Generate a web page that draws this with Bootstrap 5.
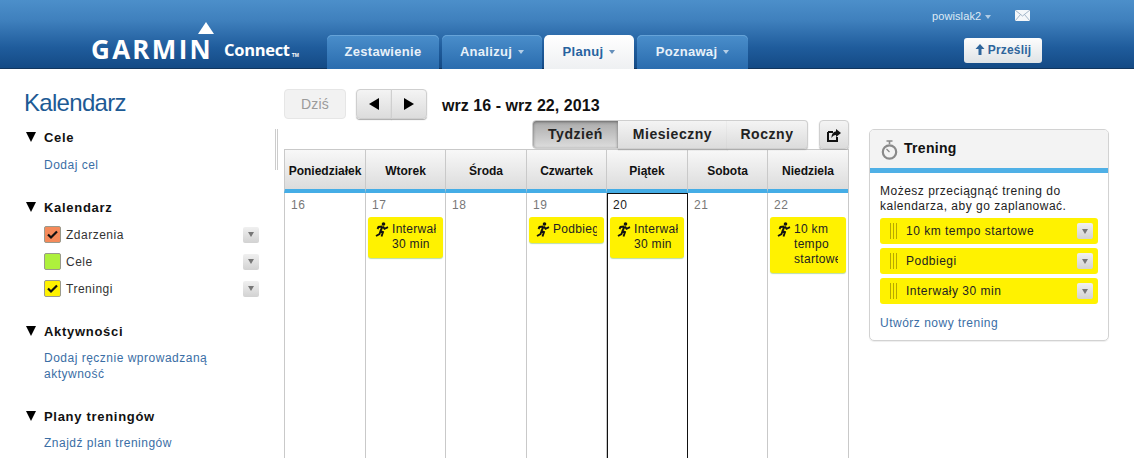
<!DOCTYPE html>
<html lang="pl"><head><meta charset="utf-8"><title>Kalendarz</title>
<link href="https://cdn.jsdelivr.net/npm/bootstrap@5.3.0/dist/css/bootstrap.min.css" rel="stylesheet">
<style>
html,body{height:458px;overflow:hidden;background:#fff}
body{font-family:"Liberation Sans",Arial,sans-serif;font-size:12px;letter-spacing:.5px;color:#222;line-height:16px}
a{color:#3a6ea5;text-decoration:none}
.gc-top{height:69px;margin-right:1px;background:linear-gradient(#4c8fca 0,#3f80bd 30%,#1f5c9c 70%,#144a85 100%);border-bottom:1px solid #12365e}
.gc-user{height:35px;padding:0 0 4px 932px;color:#dfeaf5;font-size:11px;letter-spacing:.1px;white-space:nowrap}
.gc-caret{display:inline-block;border:3px solid transparent;border-top:4px solid currentColor;border-bottom:0;vertical-align:middle;margin-left:6px;opacity:.7}
.gc-user .gc-caret{margin-left:4px}
.gc-mail{margin-left:24px}
.gc-bar{height:34px;padding-left:92px}
.gc-logo{width:235px;height:34px;color:#fff;position:relative;flex:none;display:flex;align-items:flex-end;padding-bottom:11px;line-height:1}
.gc-logo-g{font-family:"Open Sans",sans-serif;font-weight:700;font-size:26px;letter-spacing:2.300px;line-height:18px;height:18px;width:132px;flex:none;margin-left:-1px;margin-right:1px}
.gc-logo-c{font-family:"Open Sans",sans-serif;font-weight:700;font-size:16.500px;letter-spacing:-.3px;line-height:16px}
.gc-logo-t{font-size:5px;letter-spacing:0;margin-left:2px;line-height:1;font-weight:700}
.gc-tri{position:absolute;left:106px;top:-13px;width:0;height:0;border:8px solid transparent;border-bottom:12px solid #fff;border-top:0}
.gc-tab{height:34px;border-radius:5px 5px 0 0;background:linear-gradient(#4a8ecb,#2a6cae);color:#e8f1f9;font-weight:700;font-size:13px;letter-spacing:.3px;display:flex;align-items:center;justify-content:center;margin-right:3px;box-shadow:inset 0 1px 0 #66a3d8}
.gc-tab.on{background:linear-gradient(#fff,#eef0f2);color:#27629f;box-shadow:none;margin-right:3px}
.gc-t1{width:112px}.gc-t2{width:100px;margin-right:2px}.gc-t3{width:90px}.gc-t4{width:111px}
.gc-send{position:absolute;left:964px;top:38px;width:78px;height:25px;padding:0;background:linear-gradient(#fdfdfd,#dfe3e6);border:0;border-radius:3px;color:#2e659c;font-weight:700;font-size:12px;letter-spacing:.2px;line-height:25px}
.gc-send svg{margin-right:3px;vertical-align:-1px}
.gc-main{position:relative}
.gc-side{width:284px;flex:none;padding:19px 0 0 24px;position:relative}
.gc-side h1{font-size:24px;font-weight:400;letter-spacing:-.7px;color:#1d5a94;margin:0 0 12px;line-height:30px;height:30px}
.gc-sec{margin-bottom:25px}
.gc-sec h2{font-size:13px;font-weight:700;color:#111;margin:0;letter-spacing:.7px;line-height:16px;display:flex;align-items:center;padding-left:2px}
.gc-sec h2 i{width:0;height:0;border:5px solid transparent;border-top:10px solid #000;border-bottom:0;margin-right:8px;margin-top:-3px}
.gc-body{padding:11px 0 0 20px}
.gc-sec2{margin-bottom:27px}
.gc-sec3{margin-bottom:22px}
.gc-sec3 .gc-body{padding-top:5px}
.gc-sec4{margin-bottom:27px}
.gc-sec4 .gc-body,.gc-sec5 .gc-body{padding-top:10px}
.gc-row{display:flex;align-items:center;height:27px;padding-right:25px;color:#333}
.gc-chk{width:17px;height:17px;border-radius:2px;border:1px solid #9a9a8c;margin-right:5px;display:flex;align-items:center;justify-content:center}
.gc-dd{width:16px;height:16px;margin-left:auto;border-radius:2px;background:linear-gradient(#f0f0f0,#d2d2d2);display:flex;align-items:center;justify-content:center;color:#777}
.gc-dd::after{content:"";border:3px solid transparent;border-top:5px solid #777;border-bottom:0}
.gc-split{position:absolute;left:275px;top:60px;width:3px;height:41px;border-left:1px solid #ccc;border-right:1px solid #ccc}
.gc-mid{width:565px;flex:none;padding-top:20px;height:389px}
.gc-gbtn{background:linear-gradient(#f4f4f4,#dcdcdc);border:1px solid #cfcfcf;border-radius:4px;color:#111;padding:0;box-shadow:0 1px 1px #aaa}
.gc-today{width:62px;height:30px;background:#f2f2f2;color:#9b9b9b;font-size:14px;letter-spacing:.2px;box-shadow:none;border-color:#e6e6e6;margin-right:10px}
.gc-arrow{width:36px;height:30px;display:flex;align-items:center;justify-content:center}
.gc-title{font-size:16px;font-weight:700;color:#111;letter-spacing:.05px;margin:3px 0 0 15px}
.gc-views{height:29px;margin-top:1px;justify-content:flex-end}
.gc-vbtn{height:29px;font-size:14px;font-weight:700;letter-spacing:.55px;color:#222;border-radius:0}
.gc-vbtn.on{background:linear-gradient(#aaa,#ddd);box-shadow:inset 0 1px 3px #666;border-radius:4px 0 0 4px;width:87px}
.gc-v2{width:110px;border-left:0}
.gc-v3{width:81px;border-left:0;border-radius:0 4px 4px 0}
.gc-share{width:30px;height:29px;margin-left:11px;display:flex;align-items:center;justify-content:center}
.gc-cal{display:grid;grid-template-columns:81px 80px 81px 80px 81px 80px 81px;border:1px solid #c9c9c9;border-width:1px 1px 0 0;height:310px}
.gc-th{height:43px;background:linear-gradient(#f8f8f8,#dcdcdc);border-left:1px solid #c9c9c9;border-bottom:4px solid #45ade6;font-size:12px;font-weight:700;letter-spacing:0;color:#111;text-align:center;line-height:42px;white-space:nowrap;overflow:hidden}
.gc-td{border-left:1px solid #c9c9c9;padding:3px 2px 0;overflow:hidden;height:266px}
.gc-td.now{box-shadow:inset 1px 0 #111,inset 0 1px #111;padding:3px 3px 0}
.gc-td.now+.gc-td{border-left-color:#111}
.gc-td.now .gc-n{color:#222;padding-left:3px}
.gc-n{display:block;font-size:12px;color:#777;padding-left:4px;height:20px;line-height:16px;margin-top:1px}
.gc-ev{background:#fff200;border-radius:3px;box-shadow:0 1px 1px #bda;color:#222;display:flex;padding:5px 0 0 6px;overflow:hidden;white-space:nowrap;height:41px;line-height:15px;letter-spacing:.3px}
.gc-ev.s1{height:26px}.gc-ev.s3{height:56px}
.gc-ev svg{flex:none;margin-right:3px}
.gc-ev span{display:block;width:44px;flex:none;overflow:hidden}
.gc-panel{width:240px;margin:60px 0 0 20px;height:212px;flex:none;border:1px solid #d2d2d2;border-radius:5px;overflow:hidden;box-shadow:0 1px 1px #eee}
.gc-phead{height:43px;background:#f3f3f3;border-bottom:5px solid #4fb0e6;display:flex;align-items:center;font-size:14px;font-weight:700;color:#111;letter-spacing:.3px;padding:0 0 2px 11px}
.gc-phead svg{margin-right:6px;margin-top:4px}
.gc-pbody{padding:11px 10px 0;line-height:15px;color:#222}
.gc-item{height:26px;background:#fff200;border-radius:3px;display:flex;align-items:center;margin-bottom:4px;padding:0 5px 0 26px;position:relative;color:#222}
.gc-item:first-of-type{margin-top:4px}
.gc-item::before{content:"";position:absolute;left:10px;top:5px;width:7px;height:16px;background:repeating-linear-gradient(90deg,#b8a800 0 1px,transparent 1px 3px)}
.gc-pbody a{display:block;margin-top:12px}
</style></head><body>
<header class="gc-top position-relative">
  <div class="gc-user d-flex align-items-center"><span>powislak2<i class="gc-caret"></i></span>
    <svg class="gc-mail" width="15" height="11" viewBox="0 0 15 11"><rect width="15" height="11" fill="#f4f7fa"/><path d="M0 0l7.500 6L15 0M0 11l5.500-6.500M15 11L9.500 4.500" fill="none" stroke="#8fa6bd" stroke-width=".8"/></svg></div>
  <div class="gc-bar d-flex">
    <div class="gc-logo"><i class="gc-tri"></i><span class="gc-logo-g">GARMIN</span><span class="gc-logo-c">Connect</span><span class="gc-logo-t">TM</span></div>
    <nav class="d-flex">
      <a href="#" class="gc-tab gc-t1">Zestawienie</a>
      <a href="#" class="gc-tab gc-t2">Analizuj<i class="gc-caret"></i></a>
      <a href="#" class="gc-tab on gc-t3">Planuj<i class="gc-caret"></i></a>
      <a href="#" class="gc-tab gc-t4">Poznawaj<i class="gc-caret"></i></a>
    </nav>
  </div>
  <button class="btn gc-send"><svg width="10" height="11" viewBox="0 0 10 11"><path d="M5 0L9.500 5H6.500V11H3.500V5H.5z" fill="#2e659c"/></svg>Prześlij</button>
</header>
<main class="gc-main d-flex">
  <aside class="gc-side">
    <h1>Kalendarz</h1>
    <section class="gc-sec gc-sec2"><h2><i></i>Cele</h2><div class="gc-body"><a href="#">Dodaj cel</a></div></section>
    <section class="gc-sec gc-sec3"><h2><i></i>Kalendarz</h2><div class="gc-body">
      <div class="gc-row"><span class="gc-chk" style="background:#f58a5a"><svg width="13" height="11" viewBox="0 0 13 11"><path d="M2 5.500l3 3 6-6" fill="none" stroke="#111" stroke-width="2.200"/></svg></span>Zdarzenia<span class="gc-dd"></span></div>
      <div class="gc-row"><span class="gc-chk" style="background:#aef03c"></span>Cele<span class="gc-dd"></span></div>
      <div class="gc-row"><span class="gc-chk" style="background:#fff200"><svg width="13" height="11" viewBox="0 0 13 11"><path d="M2 5.500l3 3 6-6" fill="none" stroke="#111" stroke-width="2.200"/></svg></span>Treningi<span class="gc-dd"></span></div>
    </div></section>
    <section class="gc-sec gc-sec4"><h2><i></i>Aktywności</h2><div class="gc-body"><a href="#">Dodaj ręcznie wprowadzaną<br>aktywność</a></div></section>
    <section class="gc-sec gc-sec5"><h2><i></i>Plany treningów</h2><div class="gc-body"><a href="#">Znajdź plan treningów</a></div></section>
    <div class="gc-split"></div>
  </aside>
  <div class="gc-mid">
    <div class="d-flex align-items-center">
      <button class="btn gc-gbtn gc-today">Dziś</button>
      <div class="btn-group">
        <button class="btn gc-gbtn gc-arrow"><svg width="12" height="12" viewBox="0 0 12 12"><path d="M11 0v12L1 6z" fill="#000"/></svg></button>
        <button class="btn gc-gbtn gc-arrow"><svg width="12" height="12" viewBox="0 0 12 12"><path d="M1 0v12l10-6z" fill="#000"/></svg></button>
      </div>
      <span class="gc-title">wrz 16 - wrz 22, 2013</span>
    </div>
    <div class="d-flex gc-views">
      <div class="btn-group">
        <button class="btn gc-gbtn gc-vbtn on">Tydzień</button>
        <button class="btn gc-gbtn gc-vbtn gc-v2">Miesieczny</button>
        <button class="btn gc-gbtn gc-vbtn gc-v3">Roczny</button>
      </div>
      <button class="btn gc-gbtn gc-share"><svg width="16" height="14" viewBox="0 0 16 14"><path d="M2 4h5M2 4v9h9V9" fill="none" stroke="#111" stroke-width="2"/><path d="M10 1l5 4-5 4V7C8 7 6.500 8 5.500 10 5.500 6 7.500 3.500 10 3.500z" fill="#111"/></svg></button>
    </div>
    <div class="gc-cal">
      <div class="gc-th">Poniedziałek</div><div class="gc-th">Wtorek</div><div class="gc-th">Środa</div><div class="gc-th">Czwartek</div><div class="gc-th">Piątek</div><div class="gc-th">Sobota</div><div class="gc-th">Niedziela</div>
      <div class="gc-td"><span class="gc-n">16</span></div>
      <div class="gc-td"><span class="gc-n">17</span><div class="gc-ev"><svg width="15" height="15" viewBox="0 0 15 15"><use href="#rn"/></svg><span>Interwał<br>30 min</span></div></div>
      <div class="gc-td"><span class="gc-n">18</span></div>
      <div class="gc-td"><span class="gc-n">19</span><div class="gc-ev s1"><svg width="15" height="15" viewBox="0 0 15 15"><use href="#rn"/></svg><span>Podbiegi</span></div></div>
      <div class="gc-td now"><span class="gc-n">20</span><div class="gc-ev"><svg width="15" height="15" viewBox="0 0 15 15"><use href="#rn"/></svg><span>Interwały<br>30 min</span></div></div>
      <div class="gc-td"><span class="gc-n">21</span></div>
      <div class="gc-td"><span class="gc-n">22</span><div class="gc-ev s3"><svg width="15" height="15" viewBox="0 0 15 15"><use href="#rn"/></svg><span>10 km<br>tempo<br>startowe</span></div></div>
    </div>
  </div>
  <section class="gc-panel">
    <div class="gc-phead"><svg width="17" height="20" viewBox="0 0 17 20"><path d="M5.500 1h6M8.500 1v3" stroke="#8a8a8a" stroke-width="1.600" fill="none"/><circle cx="8.500" cy="12" r="6.700" fill="none" stroke="#8a8a8a" stroke-width="2.200"/><path d="M5.500 9l3 3" stroke="#8a8a8a" stroke-width="1.200"/></svg>Trening</div>
    <div class="gc-pbody">Możesz przeciągnąć trening do<br>kalendarza, aby go zaplanować.
      <div class="gc-item">10 km tempo startowe<span class="gc-dd"></span></div>
      <div class="gc-item">Podbiegi<span class="gc-dd"></span></div>
      <div class="gc-item">Interwały 30 min<span class="gc-dd"></span></div>
      <a href="#">Utwórz nowy trening</a>
    </div>
  </section>
</main>
<svg width="0" height="0" class="position-absolute"><symbol id="rn" viewBox="0 0 15 15"><circle cx="9.500" cy="2" r="1.800" fill="#111"/><path d="M8.500 4.500L4.500 5 3.500 7M8.500 4.500L6.500 9l2.500 1-1.500 4.500M6.500 9L5.500 12 2 14M9 4.500L10.500 6.800l3.500-1.600" fill="none" stroke="#111" stroke-width="1.900"/></symbol></svg>
</body></html>
